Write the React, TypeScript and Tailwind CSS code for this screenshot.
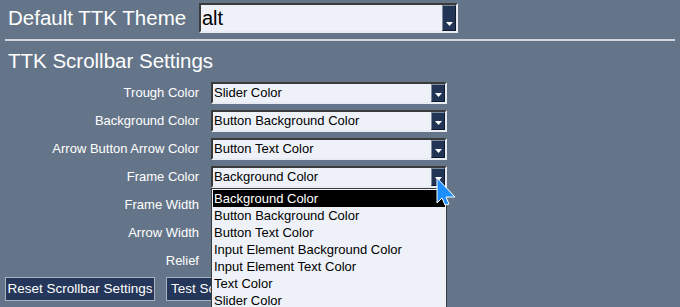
import React from "react";

function Arrow() {
  return (
    <div className="w-[14px] h-full bg-[#233555] border border-[#111a2c] border-t-[#7f8ca0] border-l-[#7f8ca0] flex items-end justify-center pb-[4px]">
      <svg width="7" height="4" viewBox="0 0 7 4">
        <polygon points="0,0 7,0 3.5,4" fill="#ffffff" />
      </svg>
    </div>
  );
}

function Combo({ value, big = false }: { value: string; big?: boolean }) {
  return (
    <div
      className={
        "flex items-stretch bg-[#eef2f8] border-2 border-t-[#3a3a3a] border-l-[#3a3a3a] border-r-[#e8ecf2] border-b-[#e8ecf2] " +
        (big ? "w-[259px] h-[30px]" : "w-[236px] h-[22px]")
      }
    >
      <div
        className={
          "flex-1 flex items-center text-black pl-[1px] " +
          (big ? "text-[20px]" : "text-[13px]")
        }
      >
        {value}
      </div>
      <Arrow />
    </div>
  );
}

function Row({ label, value }: { label: string; value?: string }) {
  return (
    <div className="flex items-center h-[22px]">
      <div className="w-[199px] text-right text-[13px] text-white">{label}</div>
      <div className="ml-[12px]">{value !== undefined ? <Combo value={value} /> : null}</div>
    </div>
  );
}

export default function App() {
  const items = [
    "Background Color",
    "Button Background Color",
    "Button Text Color",
    "Input Element Background Color",
    "Input Element Text Color",
    "Text Color",
    "Slider Color",
  ];
  return (
    <div
      className="relative w-[680px] h-[307px] overflow-hidden bg-[#657589] text-white"
      style={{ fontFamily: '"Liberation Sans", Arial, sans-serif' }}
    >
      <div className="flex items-center pt-[3px] h-[33px]">
        <div className="w-[199px] pl-[8px] text-[20.5px]">Default TTK Theme</div>
        <Combo value="alt" big />
      </div>
      <div className="mx-[5px] mt-[6px] h-[2px] bg-[#d4d6da]" />
      <div className="pl-[8px] mt-[8px] text-[20.5px] leading-[24px]">TTK Scrollbar Settings</div>
      <div className="flex flex-col gap-[6px] mt-[9px]">
        <Row label="Trough Color" value="Slider Color" />
        <Row label="Background Color" value="Button Background Color" />
        <Row label="Arrow Button Arrow Color" value="Button Text Color" />
        <Row label="Frame Color" value="Background Color" />
        <Row label="Frame Width" />
        <Row label="Arrow Width" />
        <Row label="Relief" />
      </div>
      <div className="flex gap-[11px] pl-[5px] mt-[5px]">
        <button className="h-[24px] w-[150px] bg-[#243659] border border-[#a9b1bd] text-[13.5px] text-white">
          Reset Scrollbar Settings
        </button>
        <button className="h-[24px] w-[150px] px-[4px] text-left bg-[#243659] border border-[#a9b1bd] text-[13.5px] text-white whitespace-nowrap overflow-hidden">
          Test Scrollbar Settings
        </button>
      </div>

      <div className="absolute left-[211px] top-[188px] w-[236px] h-[140px] bg-[#eef2f8] border border-[#3a3a3a] pt-[1px] px-[1px]">
        {items.map((it, i) => (
          <div
            key={it}
            className={
              "h-[17px] flex items-center text-[13px] pl-[1px] " +
              (i === 0 ? "bg-black text-white" : "text-black")
            }
          >
            {it}
          </div>
        ))}
      </div>

      <svg
        className="absolute left-[436px] top-[177px]"
        width="21"
        height="30"
        viewBox="0 0 21 30"
      >
        <polygon
          points="1,1 1,26 6,21 9,28 13,27 10,20 19,20"
          fill="#1e8fff"
          stroke="#ffffff"
          strokeWidth="1"
        />
      </svg>
    </div>
  );
}
